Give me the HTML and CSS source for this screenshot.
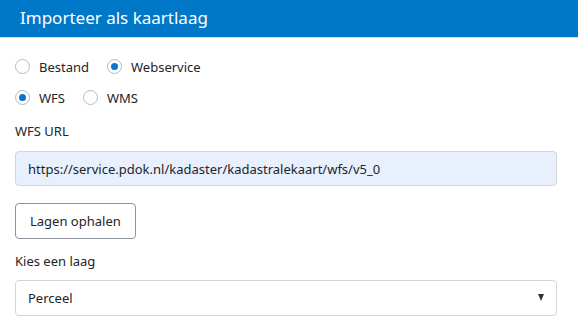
FILE: index.html
```html
<!DOCTYPE html>
<html lang="nl">

<head>
    <meta charset="UTF-8">
    <meta name="viewport" content="width=device-width,initial-scale=1" />
    <title>Importeer als kaartlaag</title>
    <link rel="stylesheet" href="styles.css">
</head>

<body>
    <header>
        <h1>Importeer als kaartlaag</h1>
    </header>
    <section class="panel">
        <div class="radio-row">
            <label class="radio"><input type="radio" name="bron" value="bestand" /> Bestand</label>
            <label class="radio"><input type="radio" name="bron" value="webservice" checked /> Webservice</label>
        </div>
        <div class="radio-row">
            <label class="radio"><input type="radio" name="type" value="wfs" checked /> WFS</label>
            <label class="radio"><input type="radio" name="type" value="wms" /> WMS</label>
        </div>

        <label class="field-label" for="url">WFS URL</label>
        <input type="text" id="url" class="text-input" value="https://service.pdok.nl/kadaster/kadastralekaart/wfs/v5_0" />

        <div class="actions">
            <button class="btn">Lagen ophalen</button>
        </div>

        <label class="field-label" for="laag">Kies een laag</label>
        <div class="select-wrap">
            <select id="laag" class="select">
                <option>Perceel</option>
                <option>Bebouwing</option>
                <option>Kadastrale grens</option>
            </select>
        </div>
    </section>
</body>

</html>
```

FILE: styles.css
```css
body {
    margin: 0;
    font-family: "Noto Sans", "Open Sans", sans-serif;
    font-size: 13px;
    color: #212529;
    background: white;
}

header {
    background: #0078c8;
    border-bottom: 1px solid #dcdcdc;
}

h1 {
    margin: 0;
    padding: 0 20px;
    height: 37px;
    line-height: 36px;
    font-size: 17px;
    font-weight: normal;
    color: white;
}

.panel {
    display: flex;
    flex-direction: column;
    padding: 13px 21px 0 15px;
}

.radio-row {
    display: flex;
    gap: 18px;
    height: 31px;
    align-items: center;
}

.radio {
    display: flex;
    align-items: center;
    gap: 9px;
}

.radio input {
    appearance: none;
    margin: 0;
    width: 15px;
    height: 15px;
    border: 1px solid #b4bac0;
    border-radius: 50%;
    background: white;
    display: grid;
    place-content: center;
}

.radio input:checked::before {
    content: "";
    width: 7px;
    height: 7px;
    border-radius: 50%;
    background: #0a74cc;
}

.field-label {
    margin-top: 8px;
    line-height: 20px;
}

.text-input {
    margin-top: 10px;
    height: 35px;
    box-sizing: border-box;
    padding: 0 12px;
    font: inherit;
    color: #212529;
    background: #e8f0fe;
    border: 1px solid #d2d6da;
    border-radius: 4px;
}

.actions {
    margin-top: 17px;
    display: flex;
}

.btn {
    height: 36px;
    padding: 0 14px;
    font: inherit;
    color: #212529;
    background: white;
    border: 1px solid #8d96a0;
    border-radius: 4px;
}

.actions + .field-label {
    margin-top: 12px;
}

.select-wrap {
    margin-top: 9px;
    position: relative;
}

.select {
    width: 100%;
    height: 36px;
    box-sizing: border-box;
    padding: 0 12px;
    font: inherit;
    color: #212529;
    background: white;
    border: 1px solid #d2d6da;
    border-radius: 4px;
    appearance: none;
}

.select-wrap::after {
    /* dropdown arrow */
    content: "";
    position: absolute;
    right: 13px;
    top: 14px;
    border-left: 3.5px solid transparent;
    border-right: 3.5px solid transparent;
    border-top: 7px solid #333;
    pointer-events: none;
}
```
